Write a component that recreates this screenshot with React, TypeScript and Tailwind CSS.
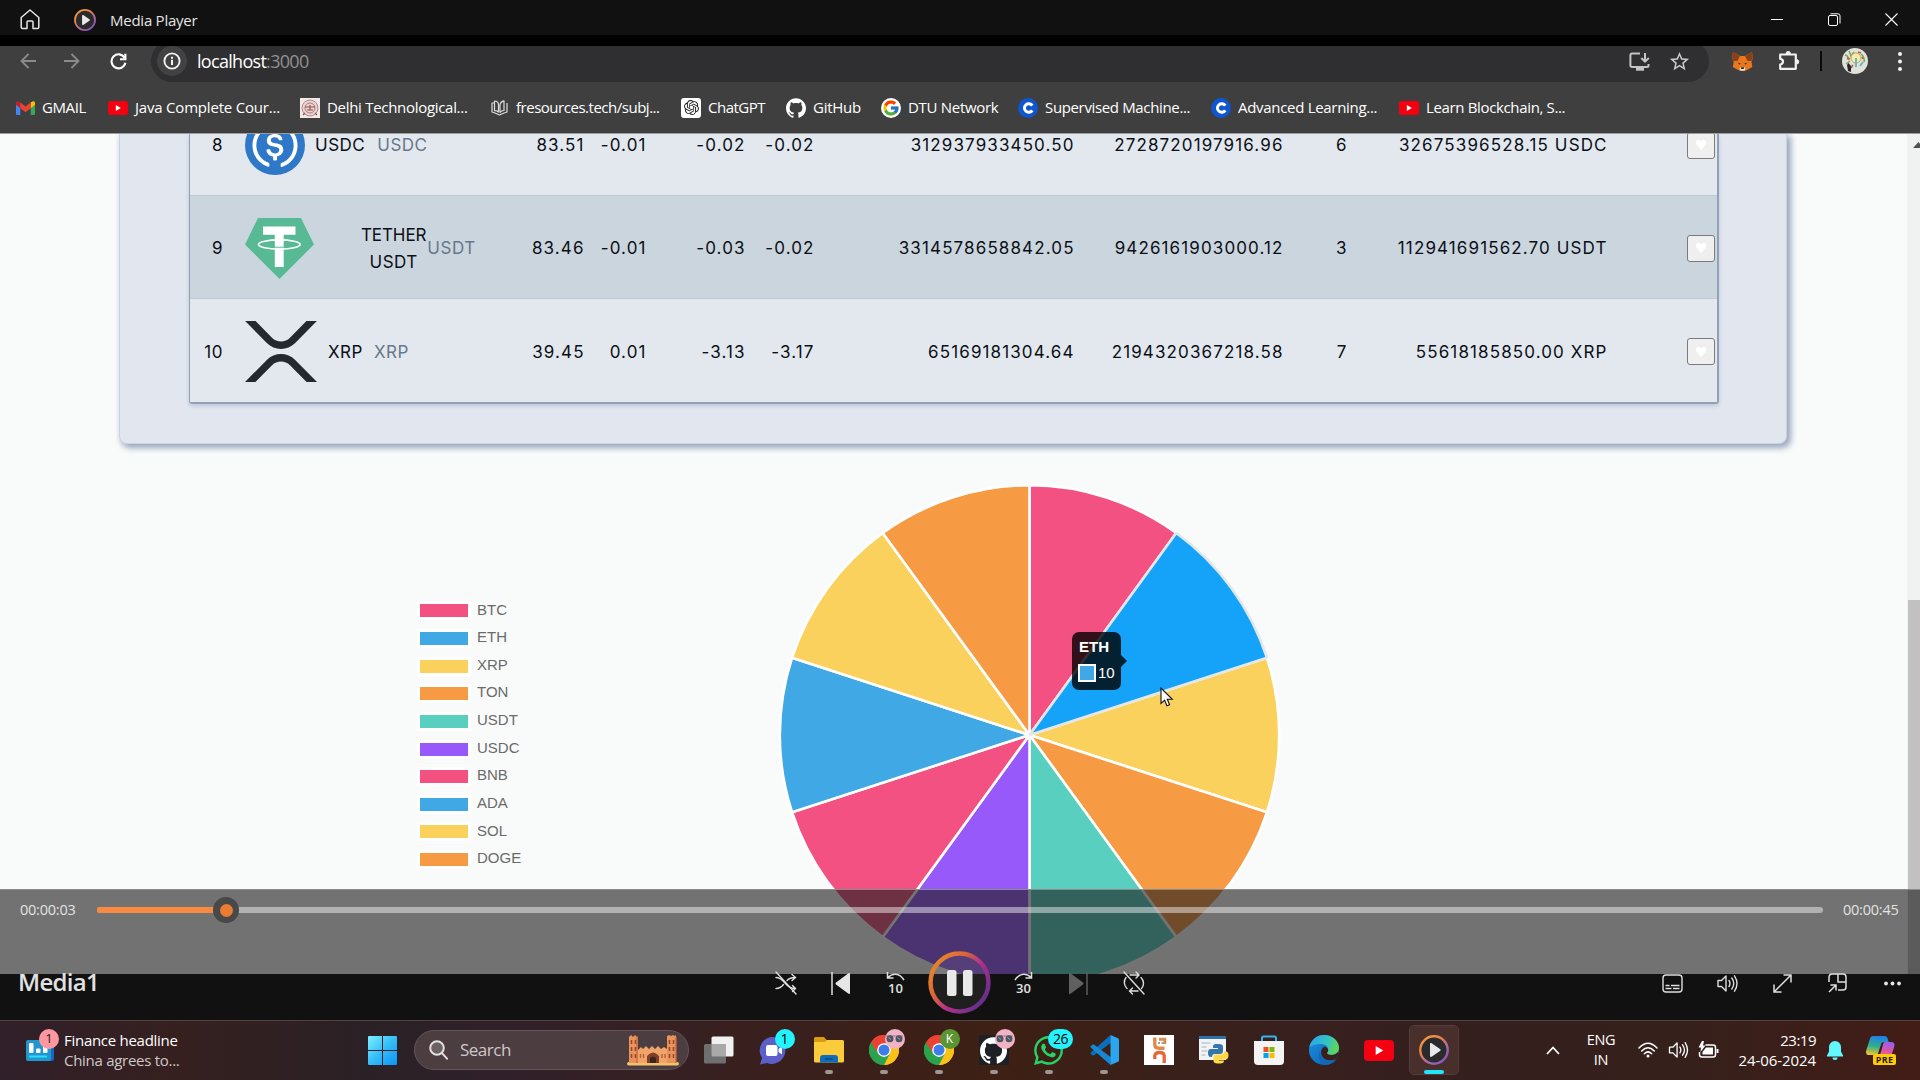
import React from "react";
import { FcGoogle } from "react-icons/fc";
import { SiOpenai, SiGithub } from "react-icons/si";
import { FaWhatsapp } from "react-icons/fa";
import { MdStarBorder } from "react-icons/md";

const UI = "font-['Open_Sans','Noto_Sans',sans-serif]";

function MediaLogo({ size, id }: { size: number; id: string }) {
  return (
    <svg width={size} height={size} viewBox="0 0 30 30">
      <defs>
        <linearGradient id={id} x1="0.1" y1="0" x2="0.9" y2="1">
          <stop offset="0" stopColor="#f59b3c" />
          <stop offset="0.35" stopColor="#e8804a" />
          <stop offset="0.65" stopColor="#a86a9c" />
          <stop offset="1" stopColor="#7f52c8" />
        </linearGradient>
      </defs>
      <circle cx="15" cy="15" r="13.7" fill="#2b2b2d" stroke={`url(#${id})`} strokeWidth="2.4" />
      <path d="M11 9.2c0-1 .8-1.4 1.6-.9l8.4 5.6c.8.5.8 1.6 0 2.1l-8.400 5.700c-.8.5-1.600.1-1.600-.9z" fill="#e9e9e9" />
    </svg>
  );
}

function YouTube({ w, h }: { w: number; h: number }) {
  return (
    <svg width={w} height={h} viewBox="0 0 30 21" preserveAspectRatio="none">
      <rect width="30" height="21" rx="4" fill="#f50010" />
      <path d="M11.700 6l7.600 4.500-7.600 4.500z" fill="#fff" />
    </svg>
  );
}

function TitleBar() {
  return (
    <div className="flex h-[35px] shrink-0 items-center bg-[#111111]">
      <svg className="ml-[20px] mt-[4px]" width="20" height="21" viewBox="0 0 20 21" fill="none" stroke="#e6e6e6" strokeWidth="1.500" strokeLinejoin="round">
        <path d="M1.200 8.500 10 1l8.800 7.500V18.200a1.300 1.300 0 0 1-1.300 1.300H13V13a1 1 0 0 0-1-1H8a1 1 0 0 0-1 1v6.500H2.500a1.300 1.300 0 0 1-1.300-1.300z" />
      </svg>
      <div className="ml-[34px] mt-[4px]">
        <MediaLogo size={22} id="mpTitle" />
      </div>
      <span className={`${UI} ml-[14px] mt-[6px] text-[15px] tracking-[-0.25px] text-[#e4e4e4]`}>Media Player</span>
      <div className="ml-auto mr-[22px] mt-[4px] flex w-[127px] items-center justify-between">
        <div className="h-px w-[12px] bg-white" />
        <svg width="13" height="13" viewBox="0 0 13 13" fill="none" stroke="#fff">
          <rect x="0.500" y="2.500" width="9" height="10" rx="1.500" />
          <path d="M2.500 .8h7.500a2 2 0 0 1 2 2v7.700" />
        </svg>
        <svg width="13" height="13" viewBox="0 0 13 13" stroke="#fff" strokeWidth="1.100">
          <path d="M.5.500l12 12M12.500.5l-12 12" />
        </svg>
      </div>
    </div>
  );
}

function NavRow() {
  return (
    <div className="-mt-[6px] flex h-[42px] items-center">
      <svg className="ml-[20px]" width="16" height="16" viewBox="0 0 16 16" fill="none" stroke="#8b8b8b" strokeWidth="1.800">
        <path d="M16 8H2M8.500 1 1.500 8l7 7" />
      </svg>
      <svg className="ml-[28px]" width="16" height="16" viewBox="0 0 16 16" fill="none" stroke="#8b8b8b" strokeWidth="1.800">
        <path d="M0 8h14M7.500 1l7 7-7 7" />
      </svg>
      <svg className="ml-[30px]" width="17" height="17" viewBox="0 0 17 17" fill="none" stroke="#fff" strokeWidth="2.100">
        <path d="M14.600 4.800A7 7 0 1 0 15.400 9.800" />
        <path d="M15.400.8v5.400H10" />
      </svg>
      <div className="ml-[24px] flex h-[42px] w-[1558px] items-center rounded-full bg-[#2f2f31]">
        <div className="ml-[6px] flex h-[30px] w-[30px] items-center justify-center rounded-full bg-[#424243]">
          <svg width="18" height="18" viewBox="0 0 18 18">
            <circle cx="9" cy="9" r="7.600" fill="none" stroke="#f2f2f2" strokeWidth="1.900" />
            <rect x="8" y="7.800" width="2" height="5.200" fill="#f2f2f2" />
            <rect x="8" y="4.800" width="2" height="2" fill="#f2f2f2" />
          </svg>
        </div>
        <span className={`${UI} ml-[10px] text-[18px] tracking-[-0.7px] text-white`}>
          localhost<span className="text-[#8f8f90]">:3000</span>
        </span>
        <svg className="ml-auto" width="21" height="19" viewBox="0 0 21 19" fill="none" stroke="#c4c4c4" strokeWidth="2">
          <path d="M11 1.500H3A1.600 1.600 0 0 0 1.400 3v10.500A1.500 1.500 0 0 0 3 15h15a1.500 1.500 0 0 0 1.500-1.500V12" />
          <path d="M7 17.200h8" strokeWidth="3" />
          <path d="M16 1v8M12.300 6l3.700 3.700L19.800 6" />
        </svg>
        <MdStarBorder className="ml-[18px] mr-[18px] size-[23px] text-[#c9c9c9]" />
      </div>
      <svg className="ml-[23px]" width="21" height="19" viewBox="0 0 21 19">
        <path d="M1 0l7 4h5l7-4 .800 6-1.300 4 .8 5-4.300 2.500L13 18.800H8L5 17.500.8 15l.9-5L.2 6z" fill="#e8771f" />
        <path d="M1 0l7 4-2.500 5L1.500 9 .2 6zM20 0l-7 4 2.500 5 4-.0L20.800 6z" fill="#8a4119" />
        <path d="M5.500 10.500l3 1-.6 1.300zM15.500 10.500l-3 1 .600 1.300z" fill="#3a2518" />
        <path d="M8 15.300h5l.3 2.500-1 1H8.700l-1-1z" fill="#e8e0d8" />
        <path d="M8.800 15.300h3.400l-.6 1.600H9.400z" fill="#222" />
      </svg>
      <svg className="ml-[26px]" width="21" height="21" viewBox="0 0 21 21" fill="none" stroke="#f2f2f2" strokeWidth="2.200" strokeLinejoin="round">
        <path d="M1.200 3.500h15.600v14.300H1.200v-4.300c1.800-.2 2.800-1.300 2.800-2.900S3 8 1.200 7.800z" />
        <path d="M7 2.600a2.200 2.200 0 0 1 4.400 0zM17.600 8.600a2.200 2.200 0 0 1 0 4.400z" fill="#f2f2f2" strokeWidth="1" />
      </svg>
      <div className="ml-[20px] h-[20px] w-[2px] bg-[#0a0a0a]" />
      <svg className="ml-[20px]" width="26" height="26" viewBox="0 0 26 26">
        <circle cx="13" cy="13" r="13" fill="#dfe3da" />
        <path d="M3 7q4 1 3 5M7 3l2 5 3-4M19 6q4 3 3 8M4 16l4-3" stroke="#7da06a" strokeWidth="1.500" fill="none" />
        <circle cx="14" cy="10" r="5" fill="#f3ecb0" stroke="#c9a84a" />
        <path d="M14 10v9M18 18l3-4" stroke="#69b7c4" strokeWidth="2" />
        <path d="M9 20l2-3M20 9l1 2M5 10l3 1M16 4l3 1" stroke="#c4564c" strokeWidth="1.600" />
        <path d="M6 23l-1-6 1.500-2L9 18v6z" fill="#26282a" />
      </svg>
      <svg className="ml-[30px]" width="4" height="19" viewBox="0 0 4 19" fill="#f2f2f2">
        <circle cx="2" cy="2" r="2" />
        <circle cx="2" cy="9.500" r="2" />
        <circle cx="2" cy="17" r="2" />
      </svg>
    </div>
  );
}

function GmailIcon() {
  return (
    <svg width="19" height="14" viewBox="0 0 19 14">
      <path d="M0 2v11a1 1 0 0 0 1 1h3.300V4.500z" fill="#4285f4" />
      <path d="M19 2v11a1 1 0 0 1-1 1h-3.300V4.500z" fill="#34a853" />
      <path d="M14.700 1.500 17 .3C18-.2 19 .6 19 2v1.800l-4.300 3.400z" fill="#fbbc04" />
      <path d="M4.300 1.500 2 .3C1-.2 0 .6 0 2v1.800l4.300 3.400z" fill="#c5221f" />
      <path d="M4.300 1.400 9.500 5.500l5.200-4.100v5.800L9.500 11.300 4.300 7.200z" fill="#ea4335" />
    </svg>
  );
}

const courseraIcon = (
  <span className="flex size-[20px] items-center justify-center rounded-full bg-[#0f56d2]">
    <svg width="12" height="12" viewBox="0 0 12 12" fill="none" stroke="#fff" strokeWidth="3">
      <path d="M10.300 3.600A4.300 4.300 0 1 0 10.300 8.400" />
    </svg>
  </span>
);

const bookmarks: { label: string; cls: string; icon: React.ReactNode }[] = [
  { label: "GMAIL", cls: "w-[93px] tracking-[-0.4px]", icon: <GmailIcon /> },
  { label: "Java Complete Cour...", cls: "w-[192px] tracking-[-0.2px]", icon: <YouTube w={20} h={14} /> },
  {
    label: "Delhi Technological...",
    cls: "w-[189px] tracking-[-0.3px]",
    icon: (
      <svg width="20" height="20" viewBox="0 0 20 20">
        <rect width="20" height="20" fill="#f3e9e9" />
        <circle cx="10" cy="10" r="8" fill="#ead2d2" stroke="#b98b8b" />
        <circle cx="10" cy="10" r="5" fill="none" stroke="#a06a6a" strokeWidth="0.800" />
        <path d="M5 9h10M7 12h6M10 7v5M3 17l2-2M17 17l-2-2" stroke="#8d5252" strokeWidth="1.200" />
      </svg>
    ),
  },
  {
    label: "fresources.tech/subj...",
    cls: "w-[192px] tracking-[-0.48px]",
    icon: (
      <svg width="17" height="16" viewBox="0 0 17 16" fill="none" stroke="#dcdcdc" strokeWidth="1.200" strokeLinejoin="round">
        <path d="M3 3H1v9l3 1 4.500 2 4.500-2 3-1V3" />
        <path d="M3.500 1C6 1 7.200 2 7.500 4.500V12C6.500 11 5 10.700 3.500 10.700zM13 .8v9.700c-2 0-3.300.8-4 2V4.500c.3-1.700 1.700-3.200 4-3.700z" />
      </svg>
    ),
  },
  {
    label: "ChatGPT",
    cls: "w-[105px] tracking-[-0.5px]",
    icon: (
      <span className="flex size-[20px] items-center justify-center rounded-[3px] bg-white">
        <SiOpenai className="size-[15px] text-[#222]" />
      </span>
    ),
  },
  { label: "GitHub", cls: "w-[95px] tracking-[-0.25px]", icon: <SiGithub className="size-[20px] text-white" /> },
  {
    label: "DTU Network",
    cls: "w-[137px] tracking-[-0.3px]",
    icon: (
      <span className="flex size-[20px] items-center justify-center rounded-full bg-white">
        <FcGoogle className="size-[18px]" />
      </span>
    ),
  },
  { label: "Supervised Machine...", cls: "w-[193px] tracking-[-0.35px]", icon: courseraIcon },
  { label: "Advanced Learning...", cls: "w-[188px] tracking-[-0.3px]", icon: courseraIcon },
  { label: "Learn Blockchain, S...", cls: "w-[188px] tracking-[-0.35px]", icon: <YouTube w={20} h={14} /> },
];

function Bookmarks() {
  return (
    <div className="flex h-[51px] items-center pl-[15px]">
      {bookmarks.map((b) => (
        <div key={b.label} className={`${UI} flex shrink-0 items-center gap-[7px] whitespace-nowrap text-[15px] text-white ${b.cls}`}>
          <span className="flex w-[20px] justify-center">{b.icon}</span>
          <span>{b.label}</span>
        </div>
      ))}
    </div>
  );
}

function UsdcLogo() {
  return (
    <svg width="60" height="60" viewBox="0 0 2000 2000">
      <circle cx="1000" cy="1000" r="1000" fill="#2f78c9" />
      <path fill="#fff" d="M1275 1158.330c0-145.830-87.500-195.830-262.500-216.660-125-16.670-150-50-150-108.340s41.670-95.830 125-95.830c75 0 116.670 25 137.500 87.500 4.170 12.500 16.670 20.830 29.170 20.830h66.660c16.670 0 29.170-12.500 29.170-29.160v-4.170c-16.670-91.670-91.670-162.500-187.500-170.830v-100c0-16.670-12.500-29.170-33.330-33.340h-62.500c-16.670 0-29.170 12.500-33.340 33.340v95.830c-125 16.670-204.160 100-204.160 204.170 0 137.500 83.330 191.660 258.330 212.500 116.670 20.830 154.170 45.830 154.170 112.500s-58.340 112.500-137.500 112.500c-108.340 0-145.840-45.840-158.340-108.340-4.160-16.660-16.660-25-29.160-25h-70.840c-16.660 0-29.160 12.500-29.160 29.170v4.170c16.660 104.160 83.330 179.160 220.830 200v100c0 16.660 12.500 29.160 33.330 33.330h62.500c16.670 0 29.170-12.500 33.340-33.330v-100c125-20.840 208.330-108.340 208.330-220.840z" />
      <path fill="#fff" d="M787.500 1595.830c-325-116.660-491.670-479.160-370.830-800 62.500-175 200-308.330 370.830-370.830 16.670-8.330 25-20.830 25-41.670V325c0-16.670-8.330-29.170-25-33.330-4.170 0-12.500 0-16.670 4.160-395.830 125-612.500 545.840-487.500 941.670 75 233.330 254.170 412.500 487.500 487.500 16.670 8.330 33.340 0 37.500-16.670 4.170-4.160 4.170-8.330 4.170-16.660v-58.340c0-12.500-12.500-29.160-25-37.500zM1229.170 295.830c-16.670-8.330-33.340 0-37.500 16.670-4.170 4.170-4.170 8.330-4.170 16.670v58.330c0 16.670 12.500 33.330 25 41.670 325 116.660 491.670 479.160 370.830 800-62.500 175-200 308.330-370.830 370.830-16.670 8.330-25 20.830-25 41.670V1700c0 16.670 8.330 29.170 25 33.330 4.170 0 12.500 0 16.670-4.160 395.830-125 612.500-545.840 487.500-941.670-75-237.500-258.340-416.670-487.500-491.670z" />
    </svg>
  );
}

function TetherLogo() {
  return (
    <svg width="69" height="61" viewBox="0 0 69 61">
      <path d="M13 0h43l13 26.500L34.500 61 0 26.500z" fill="#58ba94" />
      <path d="M18 8.500h32.500v8.300H38.700V49h-8.900V16.800H18z" fill="#fff" />
      <ellipse cx="34.300" cy="26.500" rx="20.800" ry="4.600" fill="none" stroke="#fff" strokeWidth="1.700" />
      <path d="M29.500 29.200h9.400" stroke="#58ba94" strokeWidth="1" />
    </svg>
  );
}

function XrpLogo() {
  return (
    <svg width="72" height="61" viewBox="0 0 512 424" preserveAspectRatio="none" fill="#23292f">
      <path d="M437 0h74L357 152.480c-55.770 55.190-146.190 55.190-202 0L.94 0H75l117 115.830a91.110 91.110 0 0 0 127.910 0z" />
      <path d="M74.050 424H0l155-153.420c55.770-55.190 146.190-55.190 202 0L512 424h-74L320 307.230a91.110 91.110 0 0 0-127.910 0z" />
    </svg>
  );
}

const rows = [
  {
    rank: "8", cls: "bg-[#e3e8ee]", logo: <UsdcLogo />, name: <span className="ml-[10px]">USDC</span>, sym: "USDC", symCls: "ml-[12px]",
    vals: ["83.51", "-0.01", "-0.02", "-0.02", "312937933450.50", "2728720197916.96", "6", "32675396528.15 USDC"],
  },
  {
    rank: "9", cls: "bg-[#cbd5de]", logo: <TetherLogo />, name: <span className="ml-[47px] text-center leading-[27px]"><span className="tracking-[-0.1px]">TETHER</span><br />USDT</span>, sym: "USDT", symCls: "ml-[1px]",
    vals: ["83.46", "-0.01", "-0.03", "-0.02", "3314578658842.05", "9426161903000.12", "3", "112941691562.70 USDT"],
  },
  {
    rank: "10", cls: "bg-[#e3e8ee]", logo: <XrpLogo />, name: <span className="ml-[11px]">XRP</span>, sym: "XRP", symCls: "ml-[11px]",
    vals: ["39.45", "0.01", "-3.13", "-3.17", "65169181304.64", "2194320367218.58", "7", "55618185850.00 XRP"],
  },
];

function CoinTable() {
  return (
    <div className="ml-[119px] flex h-[310px] w-[1668px] shrink-0 items-start rounded-b-[8px] border-x border-b border-[#c9d4e0] bg-[#e2e7ef] pl-[69px] shadow-[3px_3px_6px_1px_#98a5bd]">
      <div className="h-[270px] w-[1530px] overflow-hidden rounded-b-[3px] border-b-2 border-l border-r-2 border-[#93a1b8] shadow-[0_2px_4px_#bcc6d8]">
        <div className="-mt-[41px] flex flex-col">
          {rows.map((r) => (
            <div
              key={r.rank}
              className={`grid h-[103px] grid-cols-[33px_300px_61px_62px_99px_69px_260px_209px_64px_260px_108px] items-center border-b border-[#bccad6] pt-[2px] text-right font-['Inter',sans-serif] text-[17px] tracking-[0.5px] text-[#0b0f16] last:border-0 ${r.cls}`}
            >
              <span className="mt-[2px]">{r.rank}</span>
              <div className="flex items-center pl-[22px] text-left">
                {r.logo}
                <span className="mt-[2px] flex items-center">
                  {r.name}
                  <span className={`text-[#66788c] ${r.symCls}`}>{r.sym}</span>
                </span>
              </div>
              {r.vals.map((v, i) => (
                <span key={i} className="-mr-[0.6px] mt-[2px] whitespace-nowrap tracking-[1.12px]">{v}</span>
              ))}
              <div className="flex justify-end">
                <span className="flex h-[27px] w-[28px] items-center justify-center rounded-[3px] border border-[#7b7b7b] bg-[#efefef] font-['DejaVu_Sans',sans-serif] text-[14px] leading-none tracking-normal text-white">
                  ♥
                </span>
              </div>
            </div>
          ))}
        </div>
      </div>
    </div>
  );
}

const PINK = "#f35182";
const BLUE = "#41a8e6";
const YELLOW = "#fad15c";
const ORANGE = "#f69a44";
const coins = [
  { name: "BTC", color: PINK },
  { name: "ETH", color: BLUE },
  { name: "XRP", color: YELLOW },
  { name: "TON", color: ORANGE },
  { name: "USDT", color: "#59cfc0" },
  { name: "USDC", color: "#9759f9" },
  { name: "BNB", color: PINK },
  { name: "ADA", color: BLUE },
  { name: "SOL", color: YELLOW },
  { name: "DOGE", color: ORANGE },
];

function slice(i: number, r: number) {
  const a = (i * Math.PI) / 5;
  const b = ((i + 1) * Math.PI) / 5;
  const x = 251.5;
  const y = 252;
  return `M${x} ${y}L${x + r * Math.sin(a)} ${y - r * Math.cos(a)}A${r} ${r} 0 0 1 ${x + r * Math.sin(b)} ${y - r * Math.cos(b)}Z`;
}

function Chart() {
  const order = [0, 2, 3, 4, 5, 6, 7, 8, 9, 1];
  return (
    <div className="relative flex h-[530px]">
      <div className="ml-[417px] mt-[153px] flex w-[361px] flex-col">
        {coins.map((c) => (
          <div key={c.name} className="flex h-[27.650px] items-center font-['Liberation_Sans',sans-serif] text-[15px] text-[#6a6a6a]">
            <span className="h-[19px] w-[54px] border-[3px] border-white" style={{ backgroundColor: c.color }} />
            <span className="-mt-[2px] ml-[6px]">{c.name}</span>
          </div>
        ))}
      </div>
      <svg className="mt-[39px] shrink-0" width="504" height="504" viewBox="0 0 504 504">
        {order.map((i) => (
          <path key={i} d={slice(i, 249.700)} fill={i === 1 ? "#14a3f9" : coins[i].color} stroke={i === 1 ? "#e3e7ea" : "#ffffff"} strokeWidth="2.600" strokeLinejoin="bevel" />
        ))}
      </svg>
      <div className="absolute left-[1072px] top-[188px] h-[58px] w-[49px] rounded-[7px] bg-black/80 px-[6px] pt-[6px] font-['Liberation_Sans',sans-serif] text-[15px] text-white">
        <div className="pl-[1px] font-bold leading-[18px]">ETH</div>
        <div className="mt-[8px] flex items-center leading-[18px]">
          <span className="h-[18px] w-[18px] border-2 border-white bg-[#41a8e6]" />
          <span className="ml-[2px]">10</span>
        </div>
        <svg className="absolute left-[49px] top-[23px]" width="6" height="12" viewBox="0 0 6 12">
          <path d="M0 0l6 6-6 6z" fill="#000" fillOpacity="0.800" />
        </svg>
      </div>
      <svg className="absolute left-[1160px] top-[243px]" width="14" height="21" viewBox="0 0 14 21">
        <path d="M1 1v15.500l3.600-3.300 2.300 5.600 2.700-1.100-2.300-5.400h5z" fill="#fff" stroke="#111" strokeWidth="1.100" />
      </svg>
    </div>
  );
}

const ctl = "flex w-[55px] shrink-0 items-center justify-center";

function Player() {
  return (
    <div className="absolute inset-x-0 top-[843px] h-[131px]">
      <div className="h-[85px] border-t border-[#8a8b8b] bg-[#1b1b1b]/[0.615]" />
      <div className="h-[46px] bg-[#111111]" />
      <div className="absolute inset-0 flex flex-col">
        <div className={`${UI} flex h-[57px] items-start pt-[8px] text-[14.500px] leading-[26px] text-[#e2e2e2]`}>
          <span className="ml-[20px] w-[77px] tracking-[-0.230px]">00:00:03</span>
          <div className="relative mt-[10px] h-[6px] w-[1726px] rounded-full bg-white/45">
            <div className="h-full w-[129px] rounded-l-full bg-[#f88a41]" />
            <div className="absolute left-[116px] top-[-10px] flex size-[26px] items-center justify-center rounded-full bg-[#484848]">
              <span className="size-[13px] rounded-full bg-[#ea7b33]" />
            </div>
          </div>
          <span className="ml-[20px] tracking-[-0.230px]">00:00:45</span>
        </div>
        <div className="flex h-[74px] items-center">
          <span className={`${UI} -mt-[2px] ml-[18px] w-[740px] text-[24px] font-semibold tracking-[-0.700px] text-[#e2e2e2]`}>Media1</span>
          <div className={ctl}>
            <svg width="22" height="24" viewBox="0 0 22 24" fill="none" stroke="#dedede" strokeWidth="1.400" strokeLinecap="round">
              <path d="M1 6.500c4 0 6.500 2.500 9 5.500s5 5.500 10 5.500M1 17.500c3.500 0 5.500-1.500 7.500-4M12 9.500c2-2 4-3 8-3M17 3.500l3.500 3-3.500 3M17.500 14.500l3 3-3 3" />
              <path d="M1 1l20 22" />
            </svg>
          </div>
          <div className={ctl}>
            <svg width="19" height="23" viewBox="0 0 19 23">
              <path d="M1 0v23" stroke="#dedede" strokeWidth="1.500" />
              <path d="M17.500 1.200c.700-.4 1.500 0 1.500.8v19c0 .8-.800 1.200-1.500.800L5 12.500c-.7-.5-.7-1.500 0-2z" fill="#e6e6e6" />
            </svg>
          </div>
          <div className={ctl}>
            <div className="flex flex-col items-center">
              <svg width="19" height="9" viewBox="0 0 19 9" fill="none" stroke="#dedede" strokeWidth="1.500">
                <path d="M1.500 0v6h6M2 5.500C6 .8 13.500.5 18 8" />
              </svg>
              <span className={`${UI} text-[13px] font-semibold leading-[14px] text-[#e2e2e2]`}>10</span>
            </div>
          </div>
          <div className="-mt-[1px] flex w-[73px] shrink-0 justify-center">
            <svg width="63" height="63" viewBox="0 0 63 63">
              <defs>
                <linearGradient id="ring" x1="0.100" y1="0.200" x2="0.900" y2="0.800">
                  <stop offset="0" stopColor="#e8802a" />
                  <stop offset="0.300" stopColor="#d9643c" />
                  <stop offset="0.600" stopColor="#b03088" />
                  <stop offset="1" stopColor="#6a2f8a" />
                </linearGradient>
              </defs>
              <circle cx="31.500" cy="31.500" r="29" fill="#ffffff" fillOpacity="0.060" stroke="url(#ring)" strokeWidth="4.500" />
              <rect x="19" y="19" width="9.500" height="26" rx="2.500" fill="#e8e8e8" />
              <rect x="35" y="19" width="9.500" height="26" rx="2.500" fill="#e8e8e8" />
            </svg>
          </div>
          <div className={ctl}>
            <div className="flex flex-col items-center">
              <svg width="19" height="9" viewBox="0 0 19 9" fill="none" stroke="#dedede" strokeWidth="1.500">
                <path d="M17.500 0v6h-6M17 5.500C13 .8 5.500.5 1 8" />
              </svg>
              <span className={`${UI} text-[13px] font-semibold leading-[14px] text-[#e2e2e2]`}>30</span>
            </div>
          </div>
          <div className={ctl}>
            <svg width="19" height="23" viewBox="0 0 19 23">
              <path d="M18 0v23" stroke="#5c5c5c" strokeWidth="1.500" />
              <path d="M1.500 1.200C.800.8 0 1.200 0 2v19c0 .8.800 1.200 1.500.800L14 12.500c.7-.5.7-1.500 0-2z" fill="#606060" />
            </svg>
          </div>
          <div className={ctl}>
            <svg width="22" height="24" viewBox="0 0 22 24" fill="none" stroke="#dedede" strokeWidth="1.400" strokeLinecap="round">
              <path d="M7 4h8M13 1l3 3-3 3M18 6.500c3 3 3.500 8 .5 11M15 20H7M9.500 17l-3 3 3 3M4 17.500C.8 14.500.500 9.500 3 6.500" />
              <path d="M1 1l20 22" />
            </svg>
          </div>
          <div className="ml-auto flex">
            <div className={ctl}>
              <svg width="21" height="19" viewBox="0 0 21 19" fill="none" stroke="#dedede" strokeWidth="1.400">
                <rect x="1" y="1" width="19" height="17" rx="3" />
                <path d="M3.500 11.500h4M9 11.500h8.500M3.500 14.500h6M11 14.500h6.500" strokeWidth="1.700" />
              </svg>
            </div>
            <div className={ctl}>
              <svg width="21" height="19" viewBox="0 0 21 19" fill="none" stroke="#dedede" strokeWidth="1.400" strokeLinejoin="round" strokeLinecap="round">
                <path d="M1 6.500h3.500L9 2v15l-4.500-4.500H1zM12 6.500q2 3 0 6M14.800 4q4 5.500 0 11M17.500 1.800q5 7.700 0 15.400" />
              </svg>
            </div>
            <div className={ctl}>
              <svg width="19" height="19" viewBox="0 0 19 19" fill="none" stroke="#dedede" strokeWidth="1.500">
                <path d="M1 18 18 1M10.500 1H18v7.500M8.500 18H1v-7.500" />
              </svg>
            </div>
            <div className={ctl}>
              <svg width="19" height="20" viewBox="0 0 19 20" fill="none" stroke="#dedede" strokeWidth="1.500">
                <path d="M1 9V4a3 3 0 0 1 3-3h11a3 3 0 0 1 3 3v10a3 3 0 0 1-3 3h-5M10 1v8h8M1 19l7-7M2.500 12H8v5.500" />
              </svg>
            </div>
            <div className={ctl}>
              <svg width="17" height="5" viewBox="0 0 17 5" fill="#e6e6e6">
                <circle cx="2" cy="2.500" r="1.900" />
                <circle cx="8.500" cy="2.500" r="1.900" />
                <circle cx="15" cy="2.500" r="1.900" />
              </svg>
            </div>
          </div>
        </div>
      </div>
    </div>
  );
}

function Chrome() {
  return (
    <svg width="30" height="30" viewBox="0 0 48 48">
      <path d="M24 24 3.200 12A24 24 0 0 1 44.800 12z" fill="#ea4335" />
      <path d="M24 24 44.800 12A24 24 0 0 1 24 48z" fill="#fbc116" />
      <path d="M24 24V48A24 24 0 0 1 3.200 12z" fill="#2ba24c" />
      <path d="M24 13h21.300A24 24 0 0 1 24 48l9.500-18.500z" fill="#fbc116" />
      <path d="M14.500 29.500 3.200 12A24 24 0 0 0 24 48l9.500-18.500z" fill="#2ba24c" />
      <path d="M24 13h21.300A24 24 0 0 0 3.200 12l11.300 17.500z" fill="#ea4335" />
      <circle cx="24" cy="24" r="11" fill="#fff" />
      <circle cx="24" cy="24" r="8.800" fill="#3b7de9" />
    </svg>
  );
}

function Shades() {
  return (
    <span className="absolute -right-[6px] -top-[6px] flex size-[20px] items-center justify-center rounded-full bg-[#f2b3c6]">
      <svg width="17" height="8" viewBox="0 0 17 8">
        <path d="M0 1h17" stroke="#8c7a84" />
        <circle cx="4" cy="3.800" r="3.500" fill="#4c5560" />
        <circle cx="13" cy="3.800" r="3.500" fill="#4c5560" />
        <path d="M2.500 2.500l2.500 2M11.500 2.500l2.500 2" stroke="#9aa6b4" />
      </svg>
    </span>
  );
}

function VsCode() {
  return (
    <svg width="30" height="30" viewBox="0 0 30 30">
      <path d="M21.500 0 2 17.300c-.6.500-.6 1.100-.1 1.600l1.500 1.400c.4.400 1 .4 1.400.100L22 7.800z" fill="#0a6fbd" />
      <path d="M21.500 30 2 12.700c-.6-.5-.6-1.100-.1-1.600l1.500-1.400c.4-.4 1-.4 1.400-.1L22 22.200z" fill="#1787d4" />
      <path d="M21.500 0 29 3.200c.6.300 1 .9 1 1.600v20.400c0 .7-.4 1.300-1 1.600L21.500 30z" fill="#2ba6f0" />
    </svg>
  );
}

function Edge() {
  return (
    <svg width="30" height="30" viewBox="0 0 30 30">
      <defs>
        <linearGradient id="edgeTop" x1="0" y1="0.300" x2="1" y2="0.600">
          <stop offset="0" stopColor="#2aa7e8" />
          <stop offset="0.550" stopColor="#35c1c6" />
          <stop offset="1" stopColor="#62d94c" />
        </linearGradient>
        <linearGradient id="edgeLow" x1="0" y1="0" x2="1" y2="1">
          <stop offset="0" stopColor="#1b94e0" />
          <stop offset="1" stopColor="#0a5cb4" />
        </linearGradient>
      </defs>
      <circle cx="15" cy="15" r="15" fill="url(#edgeLow)" />
      <path d="M.4 12C2 4.500 8 0 15 0c8.500 0 15 6 15 12.800 0 4.500-3.400 7.200-7.300 7.200-3 0-4.700-1-4.700-2 0-.8 1.200-1.500 1.200-3.600 0-3-3.200-5.400-7.200-5.400C6.500 9 2.500 10.500.4 12z" fill="url(#edgeTop)" />
      <path d="M18 18c0 1 1.700 2 4.700 2 2.300 0 4.500-1 5.900-2.700L30 18l-2 5c-2 1.500-4 2.200-7 2.200-5 0-9-3.200-9-8 0-2.600 1.500-4.700 3.700-5.800 2.200.800 3.500 2.500 3.500 4 0 1.300-1.200 1.800-1.200 2.600z" fill="#3a1f1d" />
      <path d="M11 16c-.5 5 3 10.500 10 10.500 2.500 0 5-.8 6.800-2.300C25 28 20.500 30 16 30 11 28 8 22 11 16z" fill="#1565b8" />
    </svg>
  );
}

const taskApps: { key: string; icon: React.ReactNode; mark?: "open" | "active" }[] = [
  {
    key: "task-view",
    icon: (
      <svg width="30" height="28" viewBox="0 0 30 28">
        <rect x="7.500" y="0.500" width="22" height="20" rx="1.500" fill="#f1f1f1" />
        <rect x="0" y="8" width="22" height="19.500" rx="1.500" fill="#6f6f70" />
        <path d="M7.500 8H22v12.500H9a1.500 1.500 0 0 1-1.500-1.500z" fill="#a9a9aa" />
      </svg>
    ),
  },
  {
    key: "chat",
    icon: (
      <span className="relative">
        <svg width="30" height="30" viewBox="0 0 30 30">
          <path d="M14.500 2A13.500 13.500 0 1 1 8 28l-7 1.500L3 23A13.500 13.500 0 0 1 14.500 2z" fill="#5b5fc7" />
          <rect x="7" y="10" width="11.500" height="11" rx="2" fill="#fff" />
          <path d="M19.500 14l3.500-2.500v8L19.500 17z" fill="#fff" />
        </svg>
        <span className={`${UI} absolute -right-[6px] -top-[6px] flex size-[20px] items-center justify-center rounded-full bg-[#22f3ff] text-[14px] leading-none text-black`}>1</span>
      </span>
    ),
  },
  {
    key: "explorer",
    mark: "open",
    icon: (
      <svg width="30" height="28" viewBox="0 0 30 28">
        <path d="M0 2.500A1.500 1.500 0 0 1 1.500 1H10l3 3.500V10H0z" fill="#d99b13" />
        <path d="M0 6h11l2-2h15.500A1.500 1.500 0 0 1 30 5.500V25a1.500 1.500 0 0 1-1.500 1.500h-27A1.500 1.500 0 0 1 0 25z" fill="#fccb3c" />
        <path d="M6 26.500V22a3 3 0 0 1 3-3h12a3 3 0 0 1 3 3v4.500z" fill="#0f6cbd" />
        <path d="M11 23h8" stroke="#0a4a85" strokeWidth="1.500" />
      </svg>
    ),
  },
  { key: "chrome", mark: "open", icon: <span className="relative"><Chrome /><Shades /></span> },
  {
    key: "chrome-k",
    mark: "open",
    icon: (
      <span className="relative">
        <Chrome />
        <span className={`${UI} absolute -right-[6px] -top-[6px] flex size-[20px] items-center justify-center rounded-full bg-[#5b9433] text-[12px] leading-none text-white`}>K</span>
      </span>
    ),
  },
  {
    key: "github",
    mark: "open",
    icon: (
      <span className="relative flex size-[30px] items-center justify-center bg-[#1d2024]">
        <SiGithub className="size-[27px] text-white" />
        <Shades />
      </span>
    ),
  },
  {
    key: "whatsapp",
    mark: "open",
    icon: (
      <span className="relative">
        <FaWhatsapp className="size-[33px] text-[#27d366]" />
        <span className={`${UI} absolute -right-[8px] -top-[5px] flex h-[20px] w-[25px] items-center justify-center rounded-full bg-[#22f3ff] text-[14px] leading-none tracking-[-0.500px] text-black`}>26</span>
      </span>
    ),
  },
  { key: "vscode", mark: "open", icon: <VsCode /> },
  {
    key: "uc",
    icon: (
      <svg width="30" height="30" viewBox="0 0 30 30">
        <rect width="30" height="30" fill="#fff" />
        <path d="M10.800 2.500v7.200q0 3.500 4.200 3.500h5.500" stroke="#e08a4e" strokeWidth="3.400" fill="none" />
        <path d="M15 4.200h5.800V9" stroke="#e08a4e" strokeWidth="3" fill="none" />
        <path d="M14 8h2M17.500 8h2" stroke="#444" strokeWidth="1.200" />
        <path d="M10.800 24v-3q0-3.500 4.700-3.500t4.700 3.500v7" stroke="#e4693c" strokeWidth="3.400" fill="none" />
      </svg>
    ),
  },
  {
    key: "python",
    icon: (
      <svg width="30" height="28" viewBox="0 0 30 28">
        <rect x="0" y="0" width="27" height="24" fill="#f1f3f5" />
        <rect x="0" y="0" width="27" height="3" fill="#2f6fa8" />
        <path d="M2.500 7h9M2.500 11h5M2.500 15h6M2.500 19h4" stroke="#a9b4bf" />
        <path d="M19 8c4 0 5 1 5 3v4c0 2-1 3-3 3h-5c-2 0-3 1-3 3h-1c-2.500 0-3-2-3-4.500S10 13 12 13h7v-1h-5v-1.500C14 8.500 15.500 8 19 8z" fill="#3776ab" />
        <path d="M19.500 27.500c-4 0-5-1-5-3v-3c0-2 1-3 3-3h4.500c2 0 3-1 3-3h1.500c2.500 0 3 2 3 4s-1 4-3 4h-6.500v1h5V25c0 2-2 2.500-5.500 2.500z" fill="#ffd845" />
      </svg>
    ),
  },
  {
    key: "store",
    icon: (
      <svg width="30" height="30" viewBox="0 0 30 30">
        <path d="M8 7V3A1.500 1.500 0 0 1 9.500 1.500h11A1.500 1.500 0 0 1 22 3v4" stroke="#35b4f0" strokeWidth="2" fill="none" />
        <path d="M0 6h30v20a4 4 0 0 1-4 4H4a4 4 0 0 1-4-4z" fill="#f3f3f3" />
        <rect x="9.500" y="12" width="5" height="5" fill="#f25022" />
        <rect x="15.500" y="12" width="5" height="5" fill="#7fba00" />
        <rect x="9.500" y="18" width="5" height="5" fill="#00a4ef" />
        <rect x="15.500" y="18" width="5" height="5" fill="#ffb900" />
      </svg>
    ),
  },
  { key: "edge", icon: <Edge /> },
  { key: "youtube", icon: <YouTube w={30} h={21} /> },
  { key: "media", mark: "active", icon: <MediaLogo size={30} id="mpTask" /> },
];

function Castle() {
  return (
    <svg width="52" height="32" viewBox="0 0 52 32">
      <rect x="0" y="28" width="52" height="3.500" rx="1.700" fill="#f3c26b" />
      <path d="M2 29V3l2-2 2 2 2-2 2 2 1-1v27zM40 29V2l2-1 2 1 2-1 2 1 1-1v28z" fill="#e9935c" />
      <path d="M11 29V16l3-3 2 2 3-3 3 3 3-3 3 3 3-3 3 3 3-2 3 2v14z" fill="#f0a468" />
      <path d="M20 29v-7q6-7 12 0v7z" fill="#7d3f2a" />
      <path d="M23 29v-5q3-3 6 0v5z" fill="#3b241f" />
      <path d="M4.500 6v4M8.500 6v4M4.500 13v4M8.500 13v4M4.500 20v4M8.500 20v4M42.500 6v4M46.500 6v4M42.500 13v4M46.500 13v4M42.500 20v4M46.500 20v4" stroke="#99472e" strokeWidth="1.600" />
      <path d="M13.500 20v4M16.500 20v4M35 20v4M38 20v4" stroke="#b45f3c" strokeWidth="1.400" />
      <path d="M10 3v26M49 3v26" stroke="#c4683f" strokeWidth="1.300" />
    </svg>
  );
}

function Taskbar() {
  return (
    <div
      className={`${UI} flex h-[60px] shrink-0 items-center border-t border-[#544340] bg-[linear-gradient(90deg,#30202a_0%,#36201f_9%,#2a2126_19%,#30202a_26%,#38201f_38%,#3e2014_52%,#38201c_63%,#351f1f_75%,#36201b_88%,#421c17_100%)] pb-[1px] text-white`}
    >
      <div className="relative ml-[26px] h-[21px] w-[28px]">
        <svg width="28" height="21" viewBox="0 0 28 21">
          <rect x="6" width="22" height="21" rx="2" fill="#1766c0" />
          <rect width="25" height="21" rx="2" fill="#2196cf" />
          <rect x="3" y="3" width="4.500" height="10" rx="1" fill="#fff" />
          <rect x="10" y="8.500" width="4.500" height="4.500" rx="1" fill="#fff" />
          <rect x="17" y="5" width="4.500" height="8" rx="1" fill="#fff" />
          <rect x="3" y="15.500" width="18" height="2" fill="#2be0f5" />
        </svg>
        <span className="absolute -right-[5px] -top-[11px] flex size-[20px] items-center justify-center rounded-full bg-[#ff97a0] text-[13px] leading-none text-[#222]">1</span>
      </div>
      <div className="ml-[10px] w-[304px] text-[15px] leading-[20px] tracking-[-0.280px]">
        <div>Finance headline</div>
        <div className="text-[#cfc8c8]">China agrees to...</div>
      </div>
      <svg className="mt-px" width="29" height="29" viewBox="0 0 29 29">
        <defs>
          <linearGradient id="win" x1="0" y1="0" x2="1" y2="1">
            <stop offset="0" stopColor="#7df0fc" />
            <stop offset="0.500" stopColor="#36bdf8" />
            <stop offset="1" stopColor="#0d92f5" />
          </linearGradient>
        </defs>
        <path d="M1 0h13v14H0V1a1 1 0 0 1 1-1zM15 0h13a1 1 0 0 1 1 1v13H15zM0 15h14v14H1a1 1 0 0 1-1-1zM15 15h14v13a1 1 0 0 1-1 1H15z" fill="url(#win)" />
      </svg>
      <div className="ml-[17px] flex h-[40px] w-[275px] items-center rounded-full border border-[#655457] bg-[#4c3d41]">
        <svg className="ml-[14px]" width="19" height="20" viewBox="0 0 19 20" fill="none" stroke="#e3dfdf" strokeWidth="2" strokeLinecap="round">
          <circle cx="8" cy="8" r="6.800" fill="#6d6064" />
          <path d="M13 13.200l5 5.500" />
        </svg>
        <span className="ml-[12px] text-[17px] tracking-[-0.500px] text-[#cfc8c9]">Search</span>
        <div className="ml-auto mr-[9px]">
          <Castle />
        </div>
      </div>
      <div className="ml-[2px] flex">
        {taskApps.map((a) => (
          <div key={a.key} className="flex h-[58px] w-[55px] items-center justify-center">
            <div
              className={
                a.mark === "active"
                  ? "relative flex h-[50px] w-[50px] items-center justify-center rounded-[5px] border border-[#553c38] bg-[#482f2c]"
                  : "relative flex h-[50px] w-[50px] items-center justify-center"
              }
            >
              {a.icon}
              {a.mark === "open" && <span className="absolute bottom-[1px] left-[21px] h-[4px] w-[8px] rounded-full bg-[#9f9593]" />}
              {a.mark === "active" && <span className="absolute bottom-0 left-[14px] h-[4px] w-[20px] rounded-full bg-[#22e6f8]" />}
            </div>
          </div>
        ))}
      </div>
      <svg className="ml-[85px]" width="14" height="9" viewBox="0 0 14 9" fill="none" stroke="#fff" strokeWidth="1.800">
        <path d="M1 8l6-6.500L13 8" />
      </svg>
      <div className="ml-[23px] w-[36px] text-center text-[14.500px] leading-[20px] tracking-[-0.300px]">
        <div>ENG</div>
        <div>IN</div>
      </div>
      <svg className="ml-[19px]" width="20" height="16" viewBox="0 0 20 16" fill="none" stroke="#fff" strokeWidth="1.500" strokeLinecap="round">
        <path d="M1 6q9-9.500 18 0M3.700 9q6.300-6.500 12.600 0M6.300 11.700q3.700-3.700 7.400 0" />
        <circle cx="10" cy="14" r="1.500" fill="#fff" stroke="none" />
      </svg>
      <svg className="ml-[10px]" width="21" height="18" viewBox="0 0 21 19" fill="none" stroke="#fff" strokeWidth="1.400" strokeLinejoin="round" strokeLinecap="round">
        <path d="M1 6.500h3.500L9 2v15l-4.500-4.500H1zM12 6.500q2 3 0 6M14.800 4q4 5.500 0 11M17.500 1.800q5 7.700 0 15.400" />
      </svg>
      <svg className="ml-[9px]" width="21" height="18" viewBox="0 0 21 18">
        <path d="M7.500 4H15a2.500 2.500 0 0 1 2.500 2.500v7A2.500 2.500 0 0 1 15 16H4a2.500 2.500 0 0 1-2.500-2.500V11" fill="none" stroke="#fff" strokeWidth="1.500" />
        <path d="M8 6.500h7v7H4.500V11z" fill="#fff" />
        <path d="M18.500 8h2v4h-2z" fill="#fff" />
        <path d="M4 0 .5 6.500h2.500L2.500 11l5-6.500H5L6 0z" fill="#fff" />
      </svg>
      <div className="ml-[18px] w-[79px] text-right text-[15px] leading-[20px] tracking-[-0.080px]">
        <div className="tracking-[-0.500px]">23:19</div>
        <div>24-06-2024</div>
      </div>
      <svg className="ml-[11px]" width="16" height="19" viewBox="0 0 16 19" fill="#62f7ff">
        <path d="M8 0a6 6 0 0 1 6 6v4.500l2 4V15.500H0V14.500l2-4V6a6 6 0 0 1 6-6zM5.500 16.500h5a2.500 2.500 0 0 1-5 0z" />
      </svg>
      <div className="relative ml-[23px] h-[28px] w-[29px]">
        <svg width="29" height="28" viewBox="0 0 29 28">
          <defs>
            <linearGradient id="cpA" x1="0.500" y1="0" x2="0.300" y2="1">
              <stop offset="0" stopColor="#1f7fe8" />
              <stop offset="0.550" stopColor="#2fb08c" />
              <stop offset="1" stopColor="#f3c52c" />
            </linearGradient>
            <linearGradient id="cpB" x1="0.600" y1="0" x2="0.400" y2="1">
              <stop offset="0" stopColor="#9a5cf2" />
              <stop offset="0.550" stopColor="#e255a0" />
              <stop offset="1" stopColor="#f58a4c" />
            </linearGradient>
          </defs>
          <path d="M7 0h11.500c2 0 2.800 1 3.300 3l.9 3h-5c-1.700 0-2.300 1-2.800 2.700L11.500 19H3c-2.500 0-3.500-2-2.800-4.500L4 2.500C4.500 1 5.500 0 7 0z" fill="url(#cpA)" />
          <path d="M18.500 6H25c3 0 4 2 3.300 4.500L25 21c-.5 1.600-1.500 2.500-3 2.500H12.500L15.500 14l1.500-5.500C17.300 7 17.800 6 18.500 6z" fill="url(#cpB)" />
        </svg>
        <span className="absolute -bottom-[1px] left-[7px] flex h-[11px] w-[23px] items-center justify-center rounded-[2px] bg-[#ffcb05] text-[9px] font-bold leading-none tracking-[0.300px] text-[#2a1a10]">PRE</span>
      </div>
    </div>
  );
}

export default function App() {
  return (
    <div className="flex h-[1080px] w-[1920px] flex-col overflow-hidden bg-black">
      <TitleBar />
      <div className="relative mt-[11px] h-[974px] shrink-0">
        <div className="h-[928px] overflow-hidden bg-[#3f3f3f]">
          <NavRow />
          <Bookmarks />
          <div className="flex h-[841px] overflow-hidden border-t border-[#9b9c9c] bg-[#f9fbfa]">
            <div className="h-[841px] w-[1907px] shrink-0 overflow-hidden">
              <CoinTable />
              <Chart />
            </div>
            <div className="flex w-[13px] flex-col bg-[#f0f1f1]">
              <svg className="ml-[6px] mt-[8px]" width="12" height="6" viewBox="0 0 12 6">
                <path d="M0 6 5.500 0 11 6z" fill="#505050" />
              </svg>
              <div className="ml-[1px] mt-[452px] h-[375px] bg-[#c1c1c1]" />
            </div>
          </div>
        </div>
        <Player />
      </div>
      <Taskbar />
    </div>
  );
}
